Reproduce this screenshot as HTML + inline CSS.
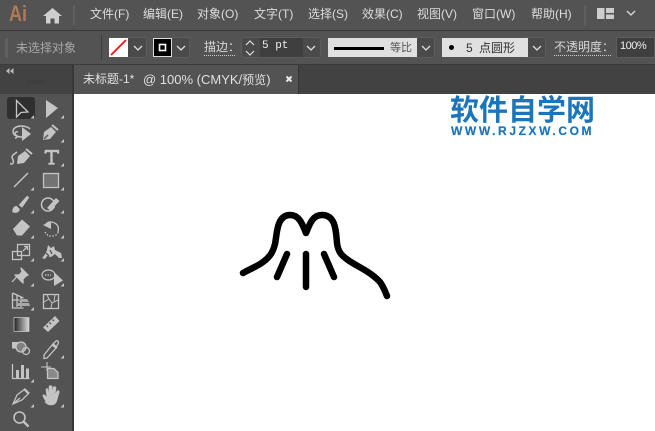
<!DOCTYPE html>
<html><head><meta charset="utf-8"><style>
html,body{margin:0;padding:0}
body{width:655px;height:431px;overflow:hidden;position:relative;background:#535353;font-family:"Liberation Sans","Noto Sans CJK SC",sans-serif}
.a{position:absolute;white-space:nowrap}
.m{top:5px;font-size:12px;line-height:18px;color:#dcdcdc}
.c{top:40px;font-size:12px;line-height:16px;color:#d8d8d8}
.dd{position:absolute;top:37px;height:21px;background:#4a4a4a;border:1px solid #5c5c5c;box-sizing:border-box;border-radius:3px}
</style></head><body>
<div class="a" style="left:0;top:30px;width:655px;height:1px;background:#3a3a3a"></div>
<div class="a" style="left:0;top:64px;width:655px;height:1px;background:#3a3a3a"></div>
<div class="a" style="left:0;top:65px;width:655px;height:29px;background:#424242"></div>
<div class="a" style="left:9px;top:1px;font-size:22px;line-height:26px;font-weight:bold;color:#b07a58;transform:scaleX(.82);transform-origin:0 0">Ai</div>
<svg class="a" style="left:43px;top:8px" width="19" height="16" viewBox="0 0 19 16"><path d="M9.500 0L0 8h3v7.500h4.500v-5h4v5H16V8h3z" fill="#cfcfcf"/></svg>
<div class="a" style="left:73px;top:5px;width:2px;height:20px;background:#5e5e5e"></div>
<div class="a m" style="left:90px">文件(F)</div>
<div class="a m" style="left:143px">编辑(E)</div>
<div class="a m" style="left:197px">对象(O)</div>
<div class="a m" style="left:254px">文字(T)</div>
<div class="a m" style="left:308px">选择(S)</div>
<div class="a m" style="left:362px">效果(C)</div>
<div class="a m" style="left:417px">视图(V)</div>
<div class="a m" style="left:472px">窗口(W)</div>
<div class="a m" style="left:531px">帮助(H)</div>
<div class="a" style="left:584px;top:5px;width:2px;height:20px;background:#5e5e5e"></div>
<svg class="a" style="left:597px;top:8px" width="40" height="12" viewBox="0 0 40 12"><path d="M0 0h7.500v11H0zM9 0h8v5H9zM9 6.500h8V11H9z" fill="#cdcdcd"/><path d="M31 3l4 4 4-4" fill="none" stroke="#ddd" stroke-width="1.300" transform="translate(-1 0)"/></svg>

<svg class="a" style="left:5px;top:38px" width="3" height="20"><path d="M0 1h3M0 3h3M0 5h3M0 7h3M0 9h3M0 11h3M0 13h3M0 15h3M0 17h3M0 19h3" stroke="#6c6c6c" stroke-width="1"/></svg>
<div class="a c" style="left:16px;color:#a8a8a8">未选择对象</div>
<div class="a" style="left:101px;top:35px;width:1px;height:25px;background:#3d3d3d"></div>
<div class="dd" style="left:125px;width:22px"></div>
<div class="dd" style="left:169px;width:21px"></div>
<svg class="a" style="left:109px;top:38px" width="19" height="19"><rect width="19" height="19" fill="#fff"/><path d="M2 17L17 2" stroke="#e8141c" stroke-width="1.800"/></svg>
<svg class="a" style="left:153px;top:38px" width="19" height="19"><rect x=".5" y=".5" width="18" height="18" fill="#000" stroke="#ddd"/><rect x="6.500" y="6.500" width="6" height="6" fill="none" stroke="#fff" stroke-width="1.600"/></svg>
<svg class="a" style="left:133px;top:45px" width="60" height="6"><path d="M1 1l4 4 4-4M44 1l4 4 4-4" fill="none" stroke="#ddd" stroke-width="1.300"/></svg>
<div class="a c" style="left:204px;border-bottom:1px dotted #ccc;line-height:15px;width:31px;overflow:hidden">描边：</div>
<div class="dd" style="left:241px;width:80px"></div>
<div class="a" style="left:260px;top:38px;width:43px;height:19px;background:#3f3f3f"></div>
<svg class="a" style="left:245px;top:40px" width="10" height="16"><path d="M1 5l4-4 4 4M1 11l4 4 4-4" fill="none" stroke="#ddd" stroke-width="1.200"/></svg>
<div class="a" style="left:262px;top:38px;font-family:'Liberation Mono',monospace;font-size:11px;line-height:16px;color:#eee">5 pt</div>
<svg class="a" style="left:306px;top:45px" width="12" height="6"><path d="M1 1l4 4 4-4" fill="none" stroke="#ddd" stroke-width="1.300"/></svg>
<div class="dd" style="left:412px;width:23px"></div>
<div class="a" style="left:328px;top:38px;width:89px;height:19px;background:#e0e0e0"></div>
<div class="a" style="left:334px;top:47px;width:50px;height:2.500px;background:#000"></div>
<div class="a" style="left:390px;top:40px;font-size:11px;line-height:16px;color:#555">等比</div>
<svg class="a" style="left:421px;top:45px" width="12" height="6"><path d="M1 1l4 4 4-4" fill="none" stroke="#ddd" stroke-width="1.300"/></svg>
<div class="dd" style="left:523px;width:23px"></div>
<div class="a" style="left:442px;top:38px;width:86px;height:19px;background:#e0e0e0"></div>
<div class="a" style="left:449px;top:45px;width:5px;height:5px;border-radius:50%;background:#000"></div>
<div class="a" style="left:466px;top:40px;font-size:12px;line-height:16px;color:#333;word-spacing:3px">5 点圆形</div>
<svg class="a" style="left:532px;top:45px" width="12" height="6"><path d="M1 1l4 4 4-4" fill="none" stroke="#ddd" stroke-width="1.300"/></svg>
<div class="a c" style="left:554px;border-bottom:1px dotted #ccc;line-height:15px;width:57px;overflow:hidden">不透明度：</div>
<div class="a" style="left:616px;top:37px;width:39px;height:21px;background:#3f3f3f;border:1px solid #5e5e5e;box-sizing:border-box;font-size:11px;line-height:17px;color:#eee;padding-left:3px;letter-spacing:-.5px">100%</div>

<div class="a" style="left:74px;top:65px;width:225px;height:29px;background:#535353;border-right:1px solid #363636;box-sizing:border-box"></div>
<div class="a" style="left:83px;top:71px;font-size:12px;line-height:17px;color:#e0e0e0">未标题-1*</div>
<div class="a" style="left:143px;top:71px;font-size:13px;line-height:17px;color:#e0e0e0">@ 100% (CMYK/<span style="font-size:12px">预览</span>)</div>
<svg class="a" style="left:285px;top:75px" width="8" height="8"><path d="M1.500 1.500l5 5M6.500 1.500l-5 5" stroke="#e8e8e8" stroke-width="2"/></svg>
<div class="a" style="left:74px;top:94px;width:581px;height:337px;background:#fff"></div>

<div class="a" style="left:0;top:65px;width:72px;height:12px;background:#424242"></div>
<div class="a" style="left:72px;top:65px;width:2px;height:366px;background:#363636"></div>
<svg class="a" style="left:6px;top:68px" width="8" height="6"><path d="M3.500 0v6L0 3zM7.500 0v6L4 3z" fill="#bbb"/></svg>
<svg class="a" style="left:26px;top:80px" width="20" height="4"><path d="M1 0v4M3 0v4M5 0v4M7 0v4M9 0v4M11 0v4M13 0v4M15 0v4M17 0v4" stroke="#3c3c3c"/></svg>
<div class="a" style="left:7px;top:97px;width:28px;height:22px;background:#2f2f2f;border-radius:3px"></div>

<svg class="a" style="left:0;top:90px" width="72" height="341" viewBox="0 90 72 341" fill="none" stroke="#c4c4c4" stroke-width="1.300">
<path d="M16.500 100.500V117l4.500-4.500 7-.5z"/>
<path d="M46 100v18l12-10z" fill="#c4c4c4" stroke="none"/>
<path d="M22 137c-5 0-9-2-9-5.500s4-5.500 8-5.500 7 1 9 3M18 132c-3-1-4 2-2 3 2 1 1 3-1 3" stroke-width="1.500"/>
<path d="M22 127v14l9-7z" fill="#c4c4c4" stroke="none"/>
<path d="M43 140l1-8 7-5 5 5-6 7z" fill="#c4c4c4" stroke="none"/><path d="M52 125l6 5" stroke-width="2"/>
<path d="M44 139l4-4" stroke="#535353"/>
<path d="M17 152l-4 3c-3 3 2 5 0 8-1 2-3 1-2 0" stroke-width="1.500"/>
<path d="M17 164l1-8 7-5 5 5-6 7z" fill="#c4c4c4" stroke="none"/><path d="M26 149l6 5" stroke-width="2"/>
<path d="M45 150h14v3.500h-1.500l-.5-1.500h-4.500v11h2v1.500h-6V163h2v-11H46.500l-.5 1.500H44.500z" fill="#c4c4c4" stroke="#c4c4c4" stroke-width=".4"/>
<path d="M14 187l14-14" stroke-width="1.500"/>
<rect x="43.500" y="173.500" width="15" height="14" fill="#737373"/>
<path d="M12.500 212c0-4 2-6 4-6l3 3c0 3-3 4.500-7 3zM19 205l8-9 2 1.500-7 10z" fill="#c4c4c4" stroke-width=".5"/>
<circle cx="48" cy="204.500" r="6.500" stroke-width="1.500"/><path d="M47 208l9-10 3.500 3-9 9.500z" fill="#c4c4c4" stroke="none"/>
<path d="M13 229l9-9.500 8 7-8 9h-5z" fill="#c4c4c4" stroke="none"/>
<path d="M58 232C60 225 55 222 50 222 48 222 47 223 46 224"/><path d="M43 225l8-4v8z" fill="#c4c4c4" stroke="none"/>
<path d="M45 232q3 5 8 4t5-4" stroke-dasharray="1.500 1.500"/>
<rect x="12.500" y="251.500" width="9" height="8"/><rect x="17.500" y="244.500" width="12" height="11"/>
<path d="M23 251l4-4M24 246.500h3.500V250"/>
<path d="M42 258c2-2 4-5 5-8l1-5 3 3 3-2 1 4 6 3 1 5-3 0-4-4-4 3-4-1-2 3z" fill="#c4c4c4" stroke="none"/><path d="M46 253l3 3M50 250l2 4" stroke="#535353"/>
<path d="M21 268l7 7-2 1-3 3 0 4-8-8 4 0 3-3zM16.500 277l-4.500 5" fill="#c4c4c4" stroke="#c4c4c4" stroke-linejoin="round"/>
<ellipse cx="48.500" cy="275" rx="6.500" ry="5" stroke-width="1.200"/><path d="M45 275h6" stroke-dasharray="1.500 1"/>
<path d="M54 272v14l9-5.500z" fill="#c4c4c4" stroke="none"/>
<path d="M12.500 293v15h11M12.500 293l11 5M12.500 300h7M17 295v12M21 297v10"/><path d="M19 302h10l-2-3h-6zM17 306h13l-1-3H18z" fill="#a8a8a8" stroke="none"/>
<rect x="43.500" y="294.500" width="15" height="14"/><path d="M44 302l5-3 3 4 6-3M49 299l-2-4M52 303l-1 5M54 301l1-6" stroke-width="1"/>
<defs><linearGradient id="g"><stop offset="0" stop-color="#222"/><stop offset="1" stop-color="#ddd"/></linearGradient></defs>
<rect x="14" y="317.500" width="15" height="14" fill="url(#g)" stroke="#ccc" stroke-width=".7"/>
<path d="M43 327.500L55 316l4.500 5L48 332z" fill="#c4c4c4" stroke="none"/><path d="M48 327l-1.500-1.500M51 324l-1.500-1.500M54 321l-1.500-1.500" stroke="#535353"/>
<path d="M12 342h6.500v6.500H12z" fill="#c4c4c4" stroke="none"/><circle cx="21" cy="347" r="5" fill="#808080"/><circle cx="26" cy="351" r="3.500"/>
<path d="M44 355l8-10 4 3-9 10-3 .5zM53 344l3-3c2-1 3 1 2 3l-2 3z"/><path d="M53 344l4 4" stroke-width="2"/>
<path d="M12.500 364v14.500h17"/><path d="M16 370h3v8h-3zM21 365h3v13h-3zM26 368.500h3v9.500h-3z" fill="#c4c4c4" stroke="none"/>
<path d="M47 362v9M41 367h10" stroke-width="1.100"/><path d="M47.500 368.500H54l4 4v6H47.500z" fill="#8a8a8a" stroke="#c4c4c4"/>
<path d="M13 404l4-9 8-6 4 4-7 7z"/><path d="M13 404l7-6"/><path d="M24 389l4 4" stroke-width="2"/>
<path d="M46 402c-1-3-4-6-3-7 2-1 3 2 4 3l-1-8c0-2 2-2 2 0l1 6V387c0-2 3-2 3 0l0 7 1-6c0-2 3-2 3 0l-1 7 2-4c1-1 3 0 2 2l-2 7c-1 4-3 5-6 5s-4-1-6-3z" fill="#c4c4c4" stroke="#c4c4c4" stroke-width=".6"/>
<circle cx="19.500" cy="417.500" r="5.500" stroke-width="1.600"/><path d="M23.500 421.500l5 5" stroke-width="2.400"/>
<path fill="#c4c4c4" stroke="none" d="M34 115v3.500h-3.500zM64 115v3.500h-3.500zM64 139v3.500h-3.500zM64 163v3.500h-3.500zM34 187v3.500h-3.500zM64 187v3.500h-3.500zM34 210v3.500h-3.500zM64 210v3.500h-3.500zM34 235v3.500h-3.500zM64 235v3.500h-3.500zM34 258v3.500h-3.500zM64 258v3.500h-3.500zM34 283v3.500h-3.500zM64 283v3.500h-3.500zM34 307v3.500h-3.500zM64 355v3.500h-3.500zM34 379v3.500h-3.500zM34 404v3.500h-3.500zM64 404v3.500h-3.500z"/>
</svg>

<svg class="a" style="left:230px;top:200px" width="170" height="110" viewBox="0 0 170 110" fill="none" stroke="#000" stroke-width="6.500" stroke-linecap="round" stroke-linejoin="round">
<path d="M13 73C20 69 28 66 33 62 40 57 43 52 45 44 47 36 46 15 60 15 69 15 72 23 76 33 80 23 83 15 92 15 106 15 106 32 107 43 108 52 112 56 118 60 126 66 140 71 150 82 153 86 155 91 157 96"/>
<path d="M57 54L47 77M76 54V87M94 54L104 77"/>
</svg>
<div class="a" style="left:450px;top:96px;font-size:29px;line-height:30px;font-weight:bold;color:#1a75bb">软件自学网</div>
<div class="a" style="left:451px;top:124px;font-size:12px;line-height:14px;font-weight:bold;color:#1a75bb;letter-spacing:2.600px;-webkit-text-stroke:.2px #1a75bb">WWW.RJZXW.COM</div>
</body></html>
